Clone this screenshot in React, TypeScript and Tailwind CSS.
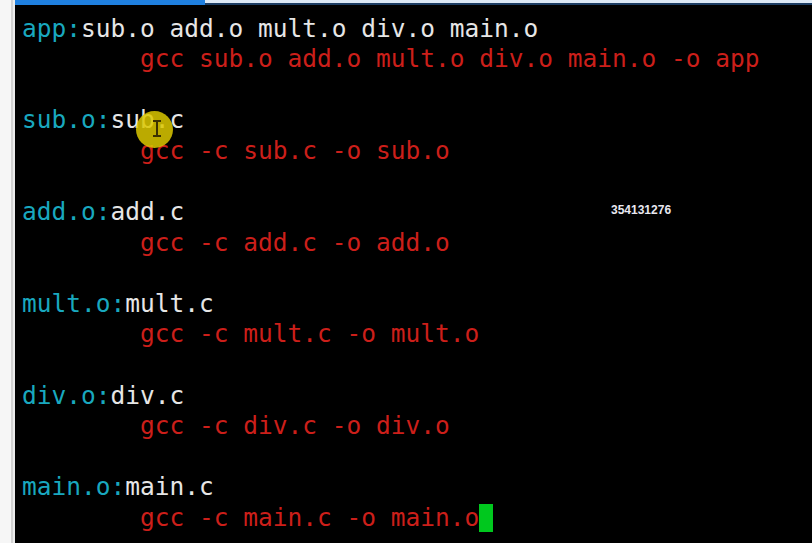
const lines: { target?: string; deps?: string; cmd?: string }[] = [
  { target: "app:", deps: "sub.o add.o mult.o div.o main.o" },
  { cmd: "gcc sub.o add.o mult.o div.o main.o -o app" },
  {},
  { target: "sub.o:", deps: "sub.c" },
  { cmd: "gcc -c sub.c -o sub.o" },
  {},
  { target: "add.o:", deps: "add.c" },
  { cmd: "gcc -c add.c -o add.o" },
  {},
  { target: "mult.o:", deps: "mult.c" },
  { cmd: "gcc -c mult.c -o mult.o" },
  {},
  { target: "div.o:", deps: "div.c" },
  { cmd: "gcc -c div.c -o div.o" },
  {},
  { target: "main.o:", deps: "main.c" },
];

export default function App() {
  return (
    <div className="w-[812px] h-[543px] flex bg-black overflow-hidden">
      {/* left window edge */}
      <div className="w-[15px] flex bg-[#f6f6f6]">
        <div className="w-[11px]" />
        <div className="w-[2px] bg-[#d2d2d2]" />
        <div className="w-[2px] bg-[#ececec]" />
      </div>

      <div className="flex-1 flex flex-col relative">
        {/* tab strip */}
        <div className="flex h-[5px]">
          <div className="w-[190px] bg-[#1f80e0]" />
          <div className="flex-1 flex flex-col">
            <div className="h-[3px] bg-[#dde9f5]" />
            <div className="h-[2px] bg-[#1c3d63]" />
          </div>
        </div>

        <div
          className="pt-[8.5px] pl-[7px] text-[24.5px] leading-[30.6px] whitespace-pre"
          style={{ fontFamily: '"DejaVu Sans Mono", monospace' }}
        >
          {lines.map((l, i) => (
            <div key={i} className="h-[30.6px]">
              {l.target && <span className="text-[#19a8bf]">{l.target}</span>}
              {l.deps && <span className="text-[#e6e6e6]">{l.deps}</span>}
              {l.cmd && <span className="text-[#cc1f1a]">{"        " + l.cmd}</span>}
            </div>
          ))}
          <div className="h-[30.6px] flex items-center">
            <span className="text-[#cc1f1a]">{"        gcc -c main.c -o main.o"}</span>
            <span className="w-[14px] h-[28px] bg-[#00c81e]" />
          </div>
        </div>

        {/* mouse highlight */}
        <div className="absolute left-[121px] top-[111px] w-[37px] h-[37px] rounded-full bg-[#dcc800]/85" />
        <div className="absolute left-[141px] top-[121px] w-[2px] h-[15px] bg-[#3a3000]" />
        <div className="absolute left-[138px] top-[120px] w-[8px] h-[2px] bg-[#3a3000]" />
        <div className="absolute left-[138px] top-[135px] w-[8px] h-[2px] bg-[#3a3000]" />

        {/* watermark */}
        <div
          className="absolute left-[596px] top-[201px] text-[12px] font-bold text-[#e8e8f0]"
          style={{ fontFamily: '"Liberation Sans", sans-serif' }}
        >
          354131276
        </div>
      </div>
    </div>
  );
}
